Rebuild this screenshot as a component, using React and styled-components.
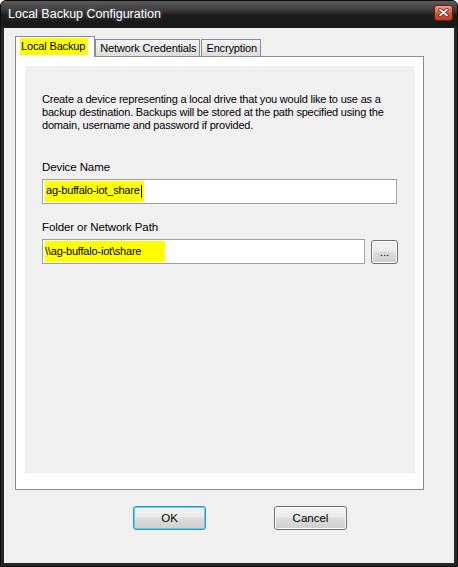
import React from 'react';
import styled, { createGlobalStyle } from 'styled-components';

const GlobalStyle = createGlobalStyle`
    html, body {
        margin: 0;
        padding: 0;
        background: #ffffff;
    }
    body {
        font-family: "Liberation Sans", Arial, sans-serif;
        font-size: 11px;
        color: #000000;
    }
`;

const Window = styled.div`
    width: 458px;
    height: 567px;
    box-sizing: border-box;
    display: flex;
    flex-direction: column;
    background: #262626;
    border: 1px solid #0c0c0c;
    border-radius: 6px 6px 0 0;
    padding: 0 3px 3px 3px;
`;

const TitleBar = styled.div`
    height: 26px;
    display: flex;
    align-items: center;
    justify-content: space-between;
    padding: 0 2px 0 4px;
    margin: 0 -3px;
    border-radius: 5px 5px 0 0;
    background: linear-gradient(#5c5c5c 0%, #3a3a3a 35%, #1c1c1c 55%, #181818 100%);
`;

const Title = styled.span`
    color: #ffffff;
    font-size: 12.5px;
    padding-left: 3px;
    text-shadow: 0 0 4px rgba(255, 255, 255, 0.35);
`;

const CloseButton = styled.div`
    width: 17px;
    height: 14px;
    margin: 0 2px 3px 0;
    border: 1px solid #6b1f14;
    border-radius: 3px;
    background: linear-gradient(#f1a08c 0%, #d8553d 50%, #c43a22 100%);
    display: flex;
    align-items: center;
    justify-content: center;
`;

const Client = styled.div`
    flex: 1;
    background: #f0f0f0;
    border-top: 1px solid #1a1a1a;
    padding: 9px 0 0 11px;
    display: flex;
    flex-direction: column;
`;

const TabStrip = styled.div`
    display: flex;
    align-items: flex-end;
    height: 20px;
    position: relative;
    z-index: 1;
`;

const Tab = styled.div`
    height: ${p => (p.$active ? '21px' : '18px')};
    box-sizing: border-box;
    padding: ${p => (p.$active ? '1px 6px 0 4px' : '0 3px 0 4px')};
    margin-right: ${p => (p.$active ? '0' : '1px')};
    border: 1px solid #898c95;
    border-bottom: ${p => (p.$active ? 'none' : '1px solid #898c95')};
    background: ${p => (p.$active ? '#ffffff' : 'linear-gradient(#f4f4f4, #dcdcdc)')};
    display: flex;
    align-items: ${p => (p.$active ? 'flex-start' : 'center')};
    letter-spacing: -0.15px;
`;

const Highlight = styled.span`
    background: #ffff00;
    padding: ${p => p.$pad || '2px 1px'};
`;

const Panel = styled.div`
    width: 409px;
    height: 434px;
    box-sizing: border-box;
    margin-top: -1px;
    border: 1px solid #898c95;
    background: #ffffff;
    padding: 9px 8px 16px 9px;
    display: flex;
`;

const PanelBody = styled.div`
    flex: 1;
    background: #f0f0f0;
    padding: 27px 17px 0 17px;
    display: flex;
    flex-direction: column;
`;

const Description = styled.p`
    margin: 0;
    line-height: 13px;
    letter-spacing: -0.2px;
    width: 355px;
`;

const Label = styled.div`
    margin: ${p => p.$top} 0 6px 0;
    font-size: 11.5px;
    letter-spacing: -0.1px;
`;

const FieldRow = styled.div`
    display: flex;
    align-items: center;
    gap: 6px;
`;

const TextBox = styled.div`
    width: ${p => p.$width};
    height: 25px;
    box-sizing: border-box;
    border: 1px solid #a0a0a0;
    background: #ffffff;
    display: flex;
    align-items: center;
    padding-left: 2px;
    letter-spacing: -0.2px;
`;

const Caret = styled.span`
    display: inline-block;
    width: 1px;
    height: 13px;
    background: #000000;
    vertical-align: middle;
    margin-left: 1px;
`;

const Button = styled.div`
    width: ${p => p.$width};
    height: ${p => p.$height || '24px'};
    box-sizing: border-box;
    border: 1px solid ${p => (p.$focus ? '#3c8fc4' : '#707070')};
    border-radius: 3px;
    background: linear-gradient(#f2f2f2 0%, #ebebeb 45%, #dddddd 50%, #cfcfcf 100%);
    box-shadow: ${p => (p.$focus ? 'inset 0 0 0 1px #4fd4f8' : 'inset 0 0 0 1px #fcfcfc')};
    display: flex;
    align-items: center;
    justify-content: center;
    font-size: 11.5px;
`;

const ButtonRow = styled.div`
    display: flex;
    padding: 16px 0 0 118px;
    gap: 68px;
`;

const Local = () => (
    <PanelBody>
        <Description>
            Create a device representing a local drive that you would like to use as a
            backup destination. Backups will be stored at the path specified using the
            domain, username and password if provided.
        </Description>

        <Label $top="29px">Device Name</Label>
        <FieldRow>
            <TextBox $width="355px">
                <Highlight $pad="3px 2px 4px 1px">ag-buffalo-iot_share<Caret /></Highlight>
            </TextBox>
        </FieldRow>

        <Label $top="17px">Folder or Network Path</Label>
        <FieldRow>
            <TextBox $width="323px">
                <Highlight $pad="4px 24px 5px 0">\\ag-buffalo-iot\share</Highlight>
            </TextBox>
            <Button $width="27px" $height="24px">...</Button>
        </FieldRow>
    </PanelBody>
);

const App = () => {
    return (
        <>
            <GlobalStyle />
            <Window>
                <TitleBar>
                    <Title>Local Backup Configuration</Title>
                    <CloseButton>
                        <svg width="11" height="9" viewBox="0 0 11 9">
                            <path d="M2 1.5 L9 7.5 M9 1.5 L2 7.5" stroke="#5a1a10" strokeWidth="3.2" strokeLinecap="round" />
                            <path d="M2 1.5 L9 7.5 M9 1.5 L2 7.5" stroke="#ffffff" strokeWidth="1.8" strokeLinecap="round" />
                        </svg>
                    </CloseButton>
                </TitleBar>
                <Client>
                    <TabStrip>
                        <Tab $active><Highlight $pad="2px 3px 3px 1px">Local Backup</Highlight></Tab>
                        <Tab>Network Credentials</Tab>
                        <Tab>Encryption</Tab>
                    </TabStrip>
                    <Panel>
                        <Local />
                    </Panel>
                    <ButtonRow>
                        <Button $width="73px" $focus>OK</Button>
                        <Button $width="73px">Cancel</Button>
                    </ButtonRow>
                </Client>
            </Window>
        </>
    );
};

export default App;
